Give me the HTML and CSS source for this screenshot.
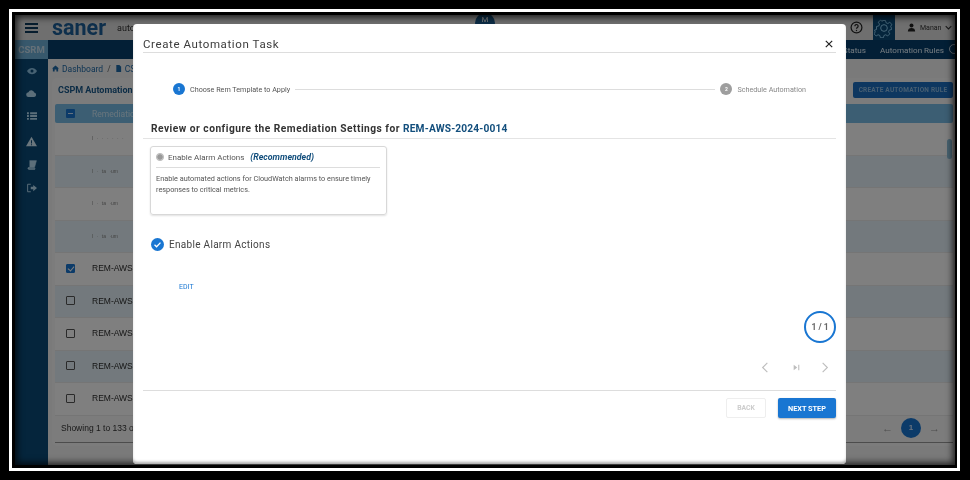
FILE: index.html
```html
<!DOCTYPE html>
<html lang="en">
<head>
<meta charset="utf-8">
<title>Create Automation Task</title>
<link rel="stylesheet" href="styles.css">
</head>
<body>
<div class="ring">
<div class="screen">
  <div class="app">
    <header class="topbar">
      <div class="burger"><span></span><span></span><span></span></div>
      <div class="logo">saner</div>
      <div class="product">automation</div>
      <div class="avatar">M</div>
      <svg class="help" viewBox="0 0 24 24" width="13" height="13"><circle cx="12" cy="12" r="10" fill="none" stroke="#222" stroke-width="2.2"/><path d="M9 9.5a3 3 0 1 1 4.6 2.5c-1 .7-1.6 1.2-1.6 2.5" fill="none" stroke="#222" stroke-width="2.2"/><circle cx="12" cy="17.6" r="1.3" fill="#222"/></svg>
      <div class="gear"><svg viewBox="0 0 24 24" width="20" height="20" fill="none" stroke="#8fd0f5" stroke-width="1.2"><circle cx="12" cy="12" r="4"/><path d="M10 2h4l.7 3 2.4 1 2.6-1.6 2.8 2.8L20.900 9.800l1 2.400L22 14l-2.900.8-1 2.400 1.600 2.600-2.800 2.800-2.600-1.600-2.400 1-.7 3h-4l-.7-3-2.400-1-2.600 1.600-2.800-2.800 1.600-2.600-1-2.400L2 14v-4l3-.7 1-2.400L4.400 4.300l2.800-2.800 2.600 1.600z" transform="translate(1.200 1.200) scale(.9)"/></svg></div>
      <div class="user">
        <svg viewBox="0 0 16 16" width="9" height="9"><circle cx="8" cy="4.500" r="3.500" fill="#222"/><path d="M1.500 15c0-4 2.500-6 6.500-6s6.500 2 6.500 6z" fill="#222"/></svg>
        <span>Manan</span>
        <svg viewBox="0 0 10 10" width="7" height="7"><path d="M1 3l4 4 4-4" fill="none" stroke="#333" stroke-width="1.500"/></svg>
      </div>
    </header>
    <div class="body">
      <aside class="side">
        <div class="chip">CSRM</div>
        <svg class="ico i1" viewBox="0 0 16 16" width="10" height="10"><path d="M0 8c2-3.500 5-5 8-5s6 1.500 8 5c-2 3.500-5 5-8 5s-6-1.500-8-5z" fill="#8ec4e6"/><circle cx="8" cy="8" r="2.400" fill="#0a4a78"/></svg>
        <svg class="ico i2" viewBox="0 0 16 16" width="11" height="11"><path d="M4 13a3.500 3.500 0 0 1-.5-7A4.500 4.500 0 0 1 12 6.500a3.300 3.300 0 0 1 0 6.500z" fill="#b9dff5"/></svg>
        <svg class="ico i3" viewBox="0 0 16 16" width="10" height="10"><path d="M0 2h3v3H0zM5 2h11v3H5zM0 6.500h3v3H0zM5 6.500h11v3H5zM0 11h3v3H0zM5 11h11v3H5z" fill="#b9dff5"/></svg>
        <svg class="ico i4" viewBox="0 0 16 16" width="11" height="11"><path d="M8 1l8 14H0z" fill="#d5ecfa"/><path d="M7.300 6h1.400v5H7.300zM7.300 12h1.400v1.500H7.300z" fill="#0a4a78"/></svg>
        <svg class="ico i5" viewBox="0 0 16 16" width="10" height="10"><path d="M4 1h11l-3 11H2.500C1 12 1 15 3 15h9.500l.5-1.500H4" fill="#b9dff5" stroke="#b9dff5"/></svg>
        <svg class="ico i6" viewBox="0 0 16 16" width="10" height="10"><path d="M6 2H1v12h5" fill="none" stroke="#b9dff5" stroke-width="1.500"/><path d="M6 6h4V3l6 5-6 5v-3H6z" fill="#b9dff5"/></svg>
      </aside>
      <div class="main">
        <nav class="nav"><span>Status</span><span>Automation Rules</span><i class="navring"></i></nav>
        <div class="crumbs">
          <svg viewBox="0 0 16 16" width="7" height="7"><path d="M8 1l8 7h-2v7h-4v-5H6v5H2V8H0z" fill="#1f6aa8"/></svg>
          <span>Dashboard</span><span class="slash">/</span>
          <svg viewBox="0 0 16 16" width="7" height="7"><path d="M3 0h7l4 4v12H3z" fill="#1f6aa8"/></svg>
          <span>CSPM</span>
        </div>
        <section class="card">
          <div class="cardhead"><b>CSPM Automation Rules</b><button class="create">CREATE AUTOMATION RULE</button></div>
          <div class="table">
            <div class="thead"><i class="minus"></i><span>Remediation</span></div>
            <div class="row"><span class="tiny">I · ·  ·  ·  · ·</span></div>
            <div class="row alt"><span class="tiny">I · ta  ·um</span></div>
            <div class="row"><span class="tiny">I · ta  ·um</span></div>
            <div class="row alt"><span class="tiny">I · ta  ·um</span></div>
            <div class="row"><i class="box on"></i><span>REM-AWS-2024</span></div>
            <div class="row alt"><i class="box"></i><span>REM-AWS-2024</span></div>
            <div class="row"><i class="box"></i><span>REM-AWS-2024</span></div>
            <div class="row alt"><i class="box"></i><span>REM-AWS-2024</span></div>
            <div class="row"><i class="box"></i><span>REM-AWS-2024</span></div>
            <div class="tfoot">
              <span>Showing 1 to 133 of 133</span>
              <div class="pager"><span>←</span><b>1</b><span>→</span></div>
            </div>
            <i class="thumb"></i>
          </div>
        </section>
      </div>
    </div>
  </div>
  <div class="scrim"></div>

  <div class="modal">
    <div class="mhead"><h1>Create Automation Task</h1>
      <svg class="close" viewBox="0 0 10 10" width="8" height="8"><path d="M1 1l8 8M9 1l-8 8" stroke="#222" stroke-width="1.500"/></svg>
    </div>
    <div class="stepper">
      <i class="dot">1</i><span>Choose Rem Template to Apply</span>
      <i class="track"></i>
      <i class="dot off">2</i><span class="muted">Schedule Automation</span>
    </div>
    <h2>Review or configure the Remediation Settings for <em>REM-AWS-2024-0014</em></h2>
    <div class="opt">
      <div class="opthead"><i class="radio"></i><span>Enable Alarm Actions</span><em>(Recommended)</em></div>
      <p>Enable automated actions for CloudWatch alarms to ensure timely responses to critical metrics.</p>
    </div>
    <div class="picked">
      <svg viewBox="0 0 14 14" width="13" height="13"><circle cx="7" cy="7" r="7" fill="#1976d2"/><path d="M3.800 7.200l2.200 2.200 4.200-4.400" fill="none" stroke="#fff" stroke-width="1.400"/></svg>
      <span>Enable Alarm Actions</span>
    </div>
    <a class="edit">EDIT</a>
    <div class="count"><b>1 / 1</b></div>
    <div class="mnav">
      <svg class="prev" viewBox="0 0 10 14" width="8" height="11"><path d="M8 1L2 7l6 6" fill="none" stroke="#bdbdbd" stroke-width="1.400"/></svg>
      <svg viewBox="0 0 10 10" width="7" height="7"><path d="M1 1l5 4-5 4z" fill="#bdbdbd"/><path d="M7.500 1h1.500v8H7.500z" fill="#bdbdbd"/></svg>
      <svg viewBox="0 0 10 14" width="8" height="11"><path d="M2 1l6 6-6 6" fill="none" stroke="#bdbdbd" stroke-width="1.400"/></svg>
    </div>
    <div class="mfoot"><button class="back">BACK</button><button class="next">NEXT STEP</button></div>
  </div>
</div>
</div>
</body>
</html>
```

FILE: styles.css
```css
* { box-sizing: border-box; }
html, body { margin: 0; height: 480px; overflow: hidden; background: #000; }
body { padding: 9px; font-family: Roboto, "Liberation Sans", sans-serif; }
.ring { width: 951px; height: 462px; border: 3px solid #fff; background: #000; padding: 3px 2px 3px 3px; }
.screen { position: relative; width: 940px; height: 450px; overflow: hidden; filter: blur(.6px); background: #f6f6f6; }
.app { display: flex; flex-direction: column; height: 100%; }
.topbar { display: flex; align-items: center; height: 25px; background: #dedede; padding-left: 10px; flex: none; }
.burger { display: flex; flex-direction: column; gap: 2px; width: 13px; }
.burger span { height: 2px; background: #0e3a5c; }
.logo { margin-left: 14px; font: 700 21.500px/25px Roboto, sans-serif; color: #1c5f98; }
.product { margin-left: 11px; font-size: 9px; color: #333; }
.avatar { margin-left: 312px; width: 20px; height: 20px; margin-top: -9px; border-radius: 50%; background: #1a5a8c; color: #fff; font-size: 8px; text-align: center; line-height: 13px; }
.help { margin-left: auto; }
.gear { margin-left: 10px; width: 22px; height: 25px; background: #0a4a78; display: flex; align-items: center; justify-content: center; }
.user { display: flex; align-items: center; gap: 4px; width: 60px; padding-left: 12px; font-size: 7px; color: #333; }
.body { flex: 1; display: flex; min-height: 0; }
.side { width: 33px; flex: none; background: #0a4a78; display: flex; flex-direction: column; align-items: center; }
.chip { width: 100%; height: 19px; background: #6fb0d8; color: #c8e0f0; font: 700 9.500px/19px Roboto, sans-serif; text-align: center; }
.ico { flex: none; }
.i1 { margin-top: 7px; }
.i2 { margin-top: 12px; }
.i3 { margin-top: 12px; }
.i4 { margin-top: 15px; }
.i5 { margin-top: 13px; }
.i6 { margin-top: 13px; }
.main { flex: 1; min-width: 0; background: #f4f4f4; }
.nav { height: 19px; background: #073f6c; display: flex; justify-content: flex-end; align-items: center; gap: 14px; color: #e6f4ff; font-size: 8.100px; padding-right: 11px; position: relative; }
.navring { position: absolute; right: -4px; top: 4px; width: 10px; height: 10px; border: 1px solid #cde; border-radius: 50%; }
.crumbs { display: flex; align-items: center; gap: 3px; height: 19px; padding-left: 4px; font-size: 8.500px; color: #1f6aa8; }
.slash { margin: 0 1px; color: #666; }
.card { margin: 0 0 0 4px; width: 904px; height: 368px; background: #f9f9f9; border-radius: 5px; padding: 3px 3px 0; }
.cardhead { display: flex; justify-content: space-between; align-items: center; height: 18px; padding-left: 3px; font-size: 9px; color: #1a5a8c; }
.create { width: 100px; height: 16px; border: 0; border-radius: 2px; background: #1c6fc0; color: #8fbde4; font: 700 6.500px Roboto, sans-serif; letter-spacing: .2px; padding: 0; }
.table { position: relative; margin-top: 5px; }
.thead { height: 19px; background: #78bce6; display: flex; align-items: center; border-radius: 2px; padding-left: 11px; gap: 17px; font-size: 8.500px; color: #cfeaf9; }
.minus { width: 9px; height: 9px; background: #1976d2; border-radius: 1px; display: block; position: relative; }
.minus::after { content: ""; position: absolute; left: 2px; right: 2px; top: 4px; height: 1px; background: #cfe6ff; }
.row { height: 32.500px; display: flex; align-items: center; padding: 0 0 1px 11px; gap: 17px; font: 8.500px "Liberation Sans", sans-serif; color: #2e2e2e; background: #fff; border-bottom: 1px solid #eaeaea; }
.row.alt { background: #e6f3fa; }
.tiny { margin-left: 26px; font-size: 5px; color: #888; word-spacing: 2px; }
.box { width: 9px; height: 9px; border: 1.200px solid #555; border-radius: 1px; display: block; }
.box.on { background: #1976d2; border-color: #1976d2; position: relative; }
.box.on::after { content: ""; position: absolute; left: 2px; top: 0; width: 3px; height: 5px; border: solid #fff; border-width: 0 1px 1px 0; transform: rotate(40deg); }
.tfoot { height: 27px; display: flex; align-items: center; justify-content: space-between; padding: 0 0 2px 6px; font: 8.500px "Liberation Sans", sans-serif; color: #333; border-bottom: 1px solid #999; }
.pager { display: flex; align-items: center; gap: 8px; padding-right: 13px; color: #999; font-size: 11px; }
.pager b { width: 20px; height: 20px; border-radius: 50%; background: #1976d2; color: #cfe6ff; font-size: 8px; line-height: 20px; text-align: center; }
.thumb { position: absolute; right: 1px; top: 35px; width: 5px; height: 20px; border-radius: 3px; background: #8fc3df; }
.scrim { position: absolute; inset: 0; background: rgba(0,0,0,.5); box-shadow: inset 0 0 7px 2px rgba(0,0,0,.8); }
.modal { position: absolute; left: 118px; top: 9px; width: 713px; height: 440px; background: #fff; border-radius: 4px; padding: 0 10px; display: flex; flex-direction: column; box-shadow: inset 0 -3px 3px -1px #aaa; }
.mhead { height: 20px; margin-top: 9px; display: flex; justify-content: space-between; align-items: center; border-bottom: 1px solid #ddd; padding: 2px 3px 0 0; flex: none; }
h1 { margin: 0; font: 400 11.500px/16px Roboto, sans-serif; letter-spacing: .6px; color: #3c3c3c; }
.stepper { display: flex; align-items: center; height: 14px; margin-top: 29px; padding: 0 30px; font-size: 7.200px; color: #555; flex: none; }
.dot { width: 12px; height: 12px; border-radius: 50%; background: #1976d2; color: #fff; font: 700 5px/12px Roboto, sans-serif; text-align: center; margin-right: 5px; flex: none; }
.dot.off { background: #9e9e9e; }
.track { flex: 1; height: 1px; background: #ddd; margin: 0 5px; }
.muted { color: #888; }
h2 { margin: 22px 0 0; padding: 2px 8px 0; height: 21px; font: 700 10.200px/17px Roboto, sans-serif; letter-spacing: .5px; color: #333; border-bottom: 1px solid #e4e4e4; flex: none; }
h2 em { font-style: normal; color: #134f7d; letter-spacing: .16px; }
.opt { margin: 7px 0 0 7px; width: 237px; height: 69px; border: 1px solid #d8d8d8; border-radius: 3px; padding: 0 6px 0 5px; box-shadow: 0 1px 2px rgba(0,0,0,.12); flex: none; }
.opthead { display: flex; align-items: center; height: 21px; font-size: 8px; color: #555; border-bottom: 1px solid #ddd; }
.radio { width: 8px; height: 8px; border-radius: 50%; background: #999; border: 1.500px solid #e4e4e4; outline: 1px solid #bbb; outline-offset: -1px; margin-right: 4px; }
.opthead em { margin-left: 6px; font: italic 700 8.800px Roboto, sans-serif; color: #134f7d; }
.opt p { margin: 5px 0 0; font-size: 7.300px; line-height: 11px; color: #555; }
.picked { display: flex; align-items: center; gap: 5px; height: 14px; margin: 22px 0 0 8px; font-size: 10px; letter-spacing: .3px; color: #444; flex: none; }
.edit { align-self: flex-start; margin: 32px 0 0 36px; font-size: 7px; line-height: 9px; color: #1976d2; flex: none; }
.count { align-self: flex-end; margin-top: 19px; width: 32px; height: 32px; border: 2.500px solid #1976d2; border-radius: 50%; display: flex; align-items: center; justify-content: center; font-size: 8.500px; color: #666; flex: none; }
.mnav { align-self: flex-end; display: flex; align-items: center; gap: 21px; margin: 19px 7px 0 0; height: 11px; flex: none; }
.prev { margin-right: 3px; }
.mfoot { display: flex; justify-content: flex-end; gap: 12px; margin-top: 17px; padding-top: 7px; border-top: 1px solid #ddd; flex: none; }
button { font-family: Roboto, sans-serif; }
.back { width: 40px; height: 20px; background: #fff; border: 1px solid #eee; border-radius: 2px; color: #ccc; font-size: 6.800px; font-weight: 700; padding: 0; }
.next { width: 58px; height: 20px; background: #1976d2; border: 0; border-radius: 2px; color: #fff; font-size: 7.300px; font-weight: 700; padding: 0; box-shadow: 0 1px 2px rgba(0,0,0,.3); }
```
